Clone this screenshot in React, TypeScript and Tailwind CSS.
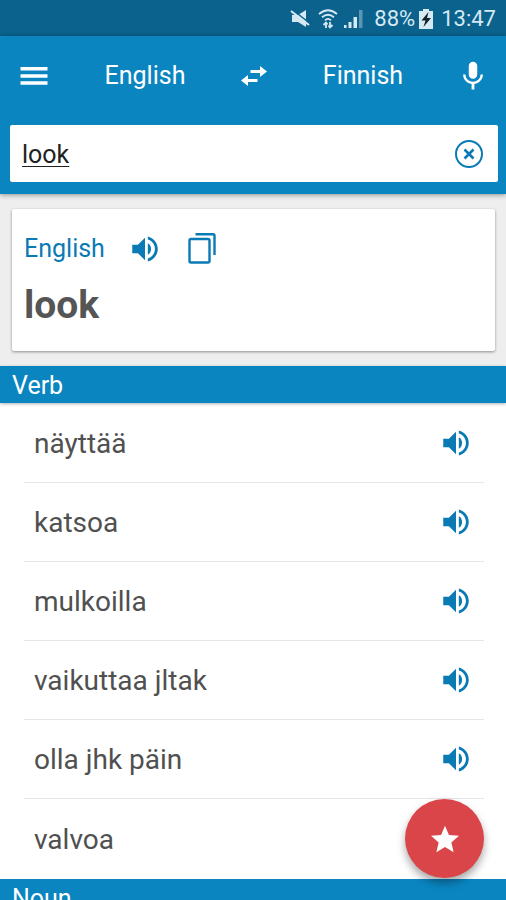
import React, { useState } from 'react';

const ENTRIES = ['näyttää', 'katsoa', 'mulkoilla', 'vaikuttaa jltak', 'olla jhk päin', 'valvoa'];

const VolumeIcon: React.FC = () => (
  <svg viewBox="0 0 24 24" className="w-[34px] h-[34px]" fill="currentColor" aria-hidden="true">
    <path d="M3 9v6h4l5 5V4L7 9H3z" />
    <path d="M16.3 12c0-1.77-.9-3.29-2.3-4.03v8.05c1.4-.73 2.3-2.25 2.3-4.02z" />
    <path d="M14 3.23v2.06c2.89.86 5 3.54 5 6.71s-2.11 5.85-5 6.71v2.06c4.01-.91 7-4.49 7-8.77s-2.99-7.86-7-8.77z" />
  </svg>
);

const StatusBar: React.FC = () => (
  <div className="h-9 pt-0.5 shrink-0 bg-[#0a628d] flex items-center justify-end pr-2.5 text-[#d5e9f3]">
    <svg viewBox="0 0 20 20" className="w-5 h-5 mr-2" fill="currentColor" aria-hidden="true">
      <path d="M2 6h6l8-5v17l-8-5H2z" />
      <path d="M2 0.5l18 14" stroke="#0a628d" strokeWidth="1.5" />
      <path d="M1 2l18 14" stroke="currentColor" strokeWidth="2.2" />
    </svg>
    <svg viewBox="0 0 20 20" className="w-5 h-5 mr-1.5" fill="none" stroke="currentColor" strokeWidth="1.8" aria-hidden="true">
      <path d="M1 5q9-7.5 18 0M4 8.3q6-5 12 0M7 11.3q3-3 6 0" />
      <path d="M8 19v-5M12 13v5" />
      <path d="M5.5 16L8 13.5l1.5 2M10.5 16.5l1.5 2 2.5-2.5" />
    </svg>
    <svg viewBox="0 0 20 20" className="w-5 h-5 mr-2.5" fill="currentColor" aria-hidden="true">
      <path d="M0 16h2.5v3H0zM4.500 13h3v6h-3zM9.500 8h3.500v11H9.500z" />
      <path d="M15 1h3.500v18H15z" opacity="0.4" />
    </svg>
    <span className="text-[22px] leading-9">88%</span>
    <svg viewBox="0 0 14 20" className="w-3.5 h-5 mx-1" aria-hidden="true">
      <path d="M4 0h6v2h4v18H0V2h4z" fill="currentColor" />
      <path d="M9.5 3L2.5 11.5h4L4.5 18l7.5-9H8z" fill="#12202a" />
    </svg>
    <span className="ml-1 text-[22px] leading-9">13:47</span>
  </div>
);

const App: React.FC = () => {
  const [query, setQuery] = useState('look');

  return (
    <div className="h-screen overflow-hidden flex flex-col bg-[#eeeeee] font-[Roboto,sans-serif]">
      <StatusBar />

      <header className="relative shrink-0 bg-[#0a85c0] text-white shadow-[0_1px_5px_rgba(0,0,0,0.4)]">
        <div className="h-[89px] pb-2.5 px-4 flex items-center justify-between">
          <button type="button" aria-label="Menu">
            <svg viewBox="0 0 24 24" className="w-9 h-9" fill="currentColor" aria-hidden="true">
              <path d="M3 17.8h18v-2.300H3v2.300zm0-4.700h18v-2.300H3v2.300zM3 6v2.300h18V6H3z" />
            </svg>
          </button>
          <div className="flex-1 flex items-center justify-center gap-7">
            <button type="button" className="w-[136px] text-[25px] leading-9">English</button>
            <button type="button" aria-label="Swap languages">
              <svg viewBox="0 0 26 20" className="w-[26px] h-5" fill="currentColor" aria-hidden="true">
                <path d="M19 0l7 5.500-7 5.500V7H9.500V4H19z" />
                <path d="M7 9l-7 5.500L7 20v-4h9.500v-3H7z" />
              </svg>
            </button>
            <button type="button" className="w-[136px] text-[25px] leading-9">Finnish</button>
          </div>
          <button type="button" aria-label="Voice input">
            <svg viewBox="0 0 24 24" className="w-[34px] h-[34px]" fill="currentColor" aria-hidden="true">
              <path d="M12 14c1.660 0 2.990-1.340 2.990-3L15 5c0-1.660-1.340-3-3-3S9 3.340 9 5v6c0 1.660 1.340 3 3 3zm5.300-3c0 3-2.540 5.100-5.300 5.100S6.700 14 6.700 11H5c0 3.410 2.720 6.230 6 6.720V21.500h2v-3.780c3.280-.48 6-3.300 6-6.720h-1.700z" />
            </svg>
          </button>
        </div>
        <div className="pl-2.5 pr-2 pb-3">
          <div className="h-[57px] pl-3 pr-3.5 flex items-center bg-white rounded-xs">
            <input
              type="text"
              aria-label="Search word"
              value={query}
              onChange={(e) => setQuery(e.target.value)}
              spellCheck={false}
              className="flex-1 min-w-0 pt-0.5 text-[25px] leading-9 text-[#212121] underline decoration-1 underline-offset-3 outline-none"
            />
            <button type="button" aria-label="Clear" className="text-[#0a7ab5]" onClick={() => setQuery('')}>
              <svg viewBox="0 0 30 30" className="w-[30px] h-[30px]" fill="none" stroke="currentColor" aria-hidden="true">
                <circle cx="15" cy="15" r="13" strokeWidth="2" />
                <path d="M10.5 10.5l9 9M19.5 10.5l-9 9" strokeWidth="2.6" />
              </svg>
            </button>
          </div>
        </div>
      </header>

      <section className="shrink-0 mt-[15px] ml-3 mr-[11px] h-[142px] px-3 pt-5 bg-white rounded-xs shadow-[0_1px_3px_rgba(0,0,0,0.4)]">
        <div className="flex items-center h-10 text-[#0a7ab5]">
          <span className="text-[25px] leading-9">English</span>
          <button type="button" aria-label="Listen" className="ml-[23px]">
            <VolumeIcon />
          </button>
          <button type="button" aria-label="Copy" className="ml-[26px]">
            <svg viewBox="0 0 28 32" className="w-7 h-8" fill="none" stroke="currentColor" strokeWidth="2.4" aria-hidden="true">
              <rect x="1.5" y="6" width="20" height="23.5" rx="1.5" />
              <path d="M7.5 1.2h17.5q1.5 0 1.5 1.5V22" />
            </svg>
          </button>
        </div>
        <h1 className="mt-3 text-[39px] leading-12 font-bold text-[#555555]">look</h1>
      </section>

      <h2 className="relative shrink-0 mt-[15px] h-[37px] px-3 bg-[#0a85c0] text-white text-[25px] leading-10 shadow-[0_1px_3px_rgba(0,0,0,0.3)]">
        Verb
      </h2>
      <ul className="shrink-0 pl-6 pr-[22px] py-px bg-white">
        {ENTRIES.map((word) => (
          <li
            key={word}
            className="h-[79px] pl-2.5 pr-[11px] flex items-center justify-between border-b border-[#e6e6e6] last:border-b-0"
          >
            <span className="pt-0.5 text-[28px] leading-9 text-[#505050]">{word}</span>
            <button type="button" aria-label={`Listen to ${word}`} className="text-[#0a7ab5]">
              <VolumeIcon />
            </button>
          </li>
        ))}
      </ul>
      <h2 className="shrink-0 h-[37px] px-3 bg-[#0a85c0] text-white text-[25px] leading-10">Noun</h2>

      <button
        type="button"
        aria-label="Add to favorites"
        className="fixed right-[22px] bottom-[22px] w-[79px] h-[79px] rounded-full bg-[#d94548] text-white flex items-center justify-center shadow-[0_5px_8px_rgba(0,0,0,0.35)]"
      >
        <svg viewBox="2 2 20 19" className="w-7 h-7" fill="currentColor" aria-hidden="true">
          <path d="M12 17.27L18.18 21l-1.64-7.03L22 9.24l-7.19-.61L12 2 9.19 8.63 2 9.24l5.46 4.73L5.82 21z" />
        </svg>
      </button>
    </div>
  );
};

export default App;
